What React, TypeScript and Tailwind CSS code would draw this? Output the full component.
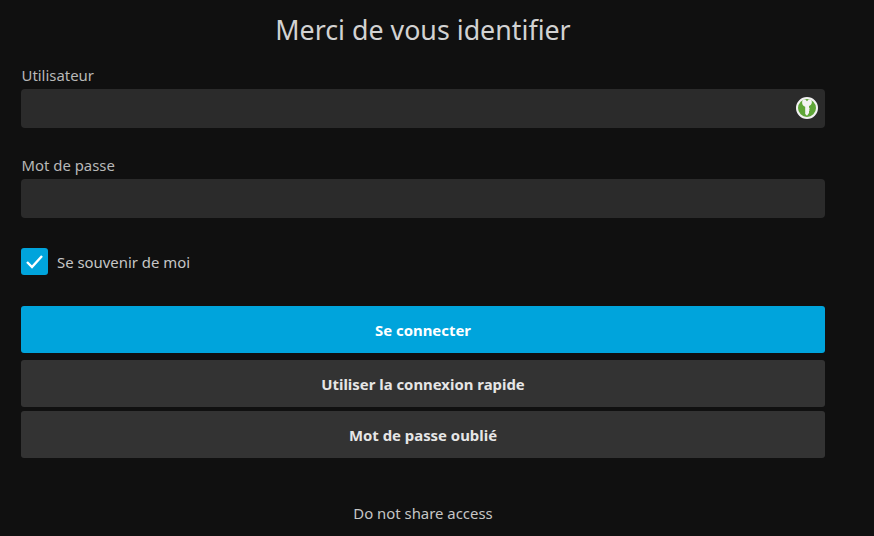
function KeyIcon() {
  return (
    <svg width="22" height="22" viewBox="0 0 22 22" className="absolute right-[7px] top-[8px]">
      <circle cx="11" cy="11" r="10" fill="#5fa638" stroke="#f2f2f2" strokeWidth="2" />
      <path
        d="M7 2.800c.8-.3 1.800-.3 2.600-.1L11 4.200l1.400-1.500c.8-.2 1.800-.2 2.600.1 1.200 1.300 1.200 3.600-.1 5-.6.600-1.200.9-1.900 1.100v1.700l.8.8-.8.800.8.900-.8.800v2.100L11 18.800l-1.800-1.900V9.700c-.7-.2-1.400-.5-2-1.100C5.800 7 5.800 4.200 7 2.800z"
        fill="#f4f4f4"
      />
    </svg>
  );
}

function Field({ label, icon }: { label: string; icon?: boolean }) {
  return (
    <div>
      <label className="block h-[24px] pl-[0.5px] text-[14.9px] leading-[20px] text-[#b8b8b8]">{label}</label>
      <div className="relative h-[39px] rounded-[4px] bg-[#2b2b2b]">
        {icon && <KeyIcon />}
      </div>
    </div>
  );
}

function ActionButton({ label, primary }: { label: string; primary?: boolean }) {
  return (
    <button
      className={`block h-[47px] w-full rounded-[3px] pt-px text-center text-[14.9px] font-bold ${
        primary ? "bg-[#00a4dc] text-white" : "bg-[#333333] text-[#e6e6e6]"
      }`}
    >
      {label}
    </button>
  );
}

export default function App() {
  return (
    <div className="h-[536px] w-[874px] overflow-hidden bg-[#101010] pl-[21px] pr-[49px] font-['Noto_Sans',sans-serif]">
      <h1 className="pt-[12px] text-center text-[26.8px] leading-[36px] font-normal text-[#d2d2d2]">
        Merci de vous identifier
      </h1>

      <div className="mt-[17px]">
        <Field label="Utilisateur" icon />
      </div>
      <div className="mt-[27px]">
        <Field label="Mot de passe" />
      </div>

      <div className="mt-[30px] flex items-center gap-[9px]">
        <div className="flex h-[27px] w-[27px] items-center justify-center rounded-[3px] bg-[#00a4dc]">
          <svg width="19" height="15" viewBox="0 0 19 15" fill="none">
            <path d="M2 8l5 5 10-11" stroke="#ffffff" strokeWidth="2.4" />
          </svg>
        </div>
        <span className="pt-[2px] text-[14.9px] text-[#c6c6c6]">Se souvenir de moi</span>
      </div>

      <div className="mt-[31px]">
        <ActionButton label="Se connecter" primary />
      </div>
      <div className="mt-[7px]">
        <ActionButton label="Utiliser la connexion rapide" />
      </div>
      <div className="mt-[4px]">
        <ActionButton label="Mot de passe oublié" />
      </div>

      <p className="mt-[45px] text-center text-[14.9px] leading-[20px] text-[#c6c6c6]">Do not share access</p>
    </div>
  );
}
